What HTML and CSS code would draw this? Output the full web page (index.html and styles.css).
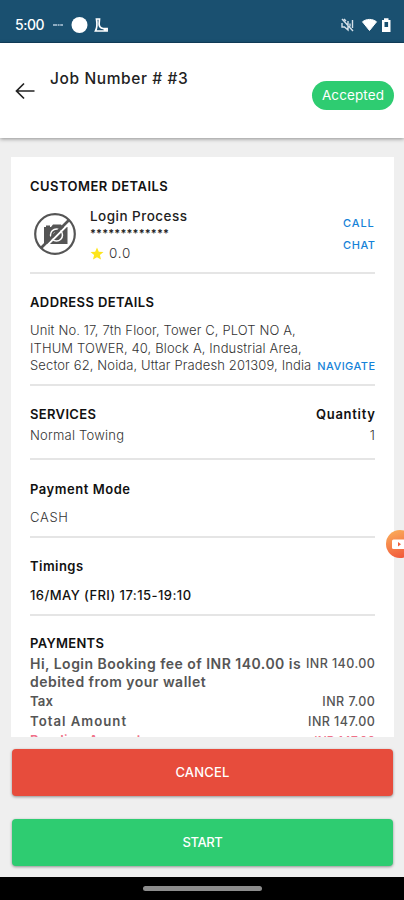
FILE: index.html
```html
<!DOCTYPE html>
<html lang="en">
<head>
<meta charset="utf-8">
<title>Job Number # #3</title>
<link rel="stylesheet" href="styles.css">
</head>
<body>
<div class="screen">
  <div class="status">
    <span class="clock">5:00</span>
    <svg class="status-left" width="60" height="20" viewBox="0 0 60 20">
      <path d="M1 10h10" stroke="#b4c9da" stroke-width="1.600" stroke-dasharray="4 .6 2 .6 3"/>
      <circle cx="27.500" cy="10" r="8" fill="#fff"/>
      <path d="M44.500 4h3l-.4 5c0 2.500 1.500 4 4 4.500h4v2.500H43.500c1.500-3 2-6 1-12z" fill="none" stroke="#fff" stroke-width="1.700"/>
      <circle cx="53" cy="14.500" r="1.500" fill="#fff"/>
    </svg>
    <svg class="status-right" width="52" height="16" viewBox="0 0 52 16">
      <path d="M2 6v4h2.500L8 13V4M2 2l11 12M4 2l2 2M10 6.500v3M12.500 3v8" fill="none" stroke="#d5e1ea" stroke-width="1.400"/>
      <path d="M22.500 4.800c4-3.200 10-3.200 14 0L29.500 13.500z" fill="#fff" stroke="#fff"/>
      <path d="M42 3h2V1.300h4.500V3h2v12H42z" fill="#fff"/>
      <path d="M44.500 5h3.600v5h-3.600z" fill="#1a5070"/>
    </svg>
  </div>
  <header class="header">
    <svg class="back" width="20" height="18" viewBox="0 0 20 18"><path d="M19.500 9H1.500M9 1.500L1.500 9L9 16.500" fill="none" stroke="#222" stroke-width="1.700"/></svg>
    <h1 class="title">Job Number # #3</h1>
    <span class="badge">Accepted</span>
  </header>
  <main class="card">
    <section class="sec customer">
      <h2 class="head">CUSTOMER DETAILS</h2>
      <div class="person">
        <svg class="avatar" width="42" height="42" viewBox="0 0 42 42">
          <path d="M10 14h2v-1.500h4V14h1l2-2.500h8l2 2.500h4.500v17H10z" fill="#555"/>
          <circle cx="22.500" cy="22" r="6" fill="#555" stroke="#fff" stroke-width="1.500"/>
          <path d="M19.500 22.500a3.200 3.200 0 0 1 3.200-3.200" fill="none" stroke="#fff" stroke-width="1.200"/>
          <path d="M9.500 36L36.500 9" stroke="#fff" stroke-width="2"/>
          <path d="M7 35L35 7" stroke="#555" stroke-width="2.600"/>
          <circle cx="21" cy="21" r="19.800" fill="none" stroke="#555" stroke-width="2.200"/>
        </svg>
        <div class="who">
          <div class="name">Login Process</div>
          <div class="mask">*************</div>
          <div class="rating">
            <svg width="14" height="13" viewBox="0 0 14 13"><path d="M7 .5l1.800 4.200 4.700.4-3.600 3 1.100 4.400L7 10.200 3 12.500l1.100-4.400-3.600-3 4.700-.4z" fill="#fde51c"/></svg>
            <span class="score">0.0</span>
          </div>
        </div>
        <div class="contact">
          <a class="call">CALL</a>
          <a class="chat">CHAT</a>
        </div>
      </div>
    </section>
    <section class="sec address">
      <h2 class="head">ADDRESS DETAILS</h2>
      <div class="row addr-row">
        <p class="addr">Unit No. 17, 7th Floor, Tower C, PLOT NO A,<br>ITHUM TOWER, 40, Block A, Industrial Area,<br>Sector 62, Noida, Uttar Pradesh 201309, India</p>
        <a class="nav">NAVIGATE</a>
      </div>
    </section>
    <section class="sec services">
      <div class="row head"><span>SERVICES</span><span class="qty">Quantity</span></div>
      <div class="row light"><span>Normal Towing</span><span>1</span></div>
    </section>
    <section class="sec mode">
      <h2 class="head">Payment Mode</h2>
      <div class="light cash">CASH</div>
    </section>
    <section class="sec timings">
      <h2 class="head">Timings</h2>
      <div class="slot">16/MAY (FRI) 17:15-19:10</div>
    </section>
    <section class="payments">
      <h2 class="head">PAYMENTS</h2>
      <div class="row fee"><span>Hi, Login Booking fee of INR 140.00 is<br>debited from your wallet</span><span class="amt">INR 140.00</span></div>
      <div class="row line"><span class="tax">Tax</span><span class="amt">INR 7.00</span></div>
      <div class="row line total"><span>Total Amount</span><span class="amt">INR 147.00</span></div>
      <div class="row line pending"><span>Pending Amount</span><span class="amt">INR 147.00</span></div>
    </section>
  </main>
  <div class="actions">
    <button class="btn cancel">CANCEL</button>
    <button class="btn start">START</button>
  </div>
  <div class="gesture"><span class="handle"></span></div>
  <div class="bubble">
    <svg width="28" height="28" viewBox="0 0 28 28"><rect x="6" y="9.500" width="14" height="9.500" rx="1.500" fill="#fff"/><path d="M12 12l3 2.200-3 2.200z" fill="#f0603c"/></svg>
  </div>
</div>
</body>
</html>
```
FILE: styles.css
```css
* { box-sizing: border-box; }
body { margin: 0; font-family: Inter, "Open Sans", sans-serif; font-size: 13px; color: #111; }
h1, h2, p { margin: 0; font-size: inherit; font-weight: inherit; }
span, a, p { white-space: nowrap; }
.screen { position: relative; width: 404px; height: 900px; overflow: hidden; background: #efefef; display: flex; flex-direction: column; }
.status { height: 43px; flex: none; background: #1a5070; border-bottom: 1px solid #12405f; color: #fff; display: flex; align-items: center; padding: 7px 12px 0 15px; }
.clock { font-size: 14px; font-weight: 500; letter-spacing: -.5px; width: 29px; }
.status-left { margin-left: 8px; }
.status-right { margin-left: auto; }
.header { height: 95px; flex: none; background: #fff; box-shadow: 0 1px 4px rgba(0,0,0,.4); display: flex; padding: 0 10px 0 15px; }
.back { margin-top: 39px; }
.title { margin: 26px 0 0 15px; line-height: 20px; font-size: 15.500px; font-weight: 500; letter-spacing: .6px; flex: 1; color: #222; }
.badge { margin-top: 38px; height: 29px; width: 82px; border-radius: 15px; background: #2ecc71; color: #fff; font-size: 13.500px; letter-spacing: .1px; line-height: 29px; text-align: center; }
.card { margin: 19px 10px 0 11px; height: 580px; flex: none; background: #fff; padding: 0 19px; overflow: hidden; }
.sec { border-bottom: 2px solid #e5e5e5; }
.head { font-size: 13px; font-weight: 600; line-height: 18px; letter-spacing: .45px; }
.row { display: flex; justify-content: space-between; }
.light { font-size: 13px; font-weight: 300; line-height: 18px; letter-spacing: .22px; color: #333; }
.customer { height: 117px; padding-top: 20px; }
.person { display: flex; margin-top: 12px; }
.avatar { margin: 6px 0 0 4px; }
.who { margin-left: 14px; flex: 1; }
.name { font-size: 13.500px; font-weight: 500; line-height: 18px; letter-spacing: .47px; color: #222; }
.mask { font-size: 11px; font-weight: 600; line-height: 16px; height: 17px; letter-spacing: .15px; color: #222; }
.rating { display: flex; align-items: center; gap: 5px; height: 22px; font-size: 13.500px; font-weight: 300; color: #333; }
.score { letter-spacing: .8px; }
.contact { display: flex; flex-direction: column; gap: 4px; padding-top: 7px; width: 32px; }
.contact a, .nav { font-size: 11px; font-weight: 500; line-height: 18px; color: #1582d8; }
.call { letter-spacing: .9px; }
.chat { letter-spacing: .57px; }
.nav { letter-spacing: .45px; margin-right: -.5px; }
.address { height: 112px; padding-top: 19px; }
.address .head { letter-spacing: .4px; }
.addr-row { margin-top: 11px; align-items: flex-end; }
.addr { font-size: 13px; font-weight: 300; line-height: 17.500px; letter-spacing: .125px; color: #333; }
.services { height: 74px; padding-top: 19px; }
.services .head { letter-spacing: .35px; }
.services .qty { letter-spacing: .72px; margin-right: -.7px; }
.services .light { margin-top: 3px; }
.mode { height: 78px; padding-top: 20px; }
.mode .head { letter-spacing: .54px; }
.mode .light { margin-top: 10px; }
.mode .cash { letter-spacing: .7px; }
.timings { height: 78px; padding-top: 19px; }
.slot { margin-top: 11px; font-size: 13px; font-weight: 500; line-height: 18px; letter-spacing: .44px; }
.payments { padding-top: 18px; color: #555; font-weight: 600; }
.payments .head { color: #111; letter-spacing: .3px; }
.fee { font-size: 14px; line-height: 18px; margin-top: 3px; margin-bottom: 1px; letter-spacing: .48px; }
.line { font-size: 13.200px; line-height: 19.500px; letter-spacing: .4px; }
.tax { letter-spacing: .1px; }
.total { letter-spacing: 1px; }
.amt { font-size: 12.500px; font-weight: 500; letter-spacing: .45px; margin-right: -.4px; }
.pending { color: #f07088; }
.pending .amt { font-size: 12px; letter-spacing: .07px; }
.actions { padding: 12px 11px 0 12px; display: flex; flex-direction: column; gap: 23px; }
.btn { height: 47px; border: 0; border-radius: 4px; color: #fff; font: 500 13px/47px Inter, sans-serif; padding: 0; box-shadow: 0 1px 3px rgba(0,0,0,.4); }
.cancel { background: #e74c3c; letter-spacing: .19px; }
.start { background: #2ecc71; letter-spacing: -.4px; }
.gesture { height: 23px; flex: none; margin-top: auto; background: #000; display: flex; justify-content: center; padding-top: 9px; }
.handle { width: 119px; height: 5px; border-radius: 3px; background: #8c8c8c; }
.bubble { position: absolute; left: 386px; top: 530px; width: 28px; height: 28px; border-radius: 50%; background: linear-gradient(160deg, #fbb25c, #f04e37); }
```
